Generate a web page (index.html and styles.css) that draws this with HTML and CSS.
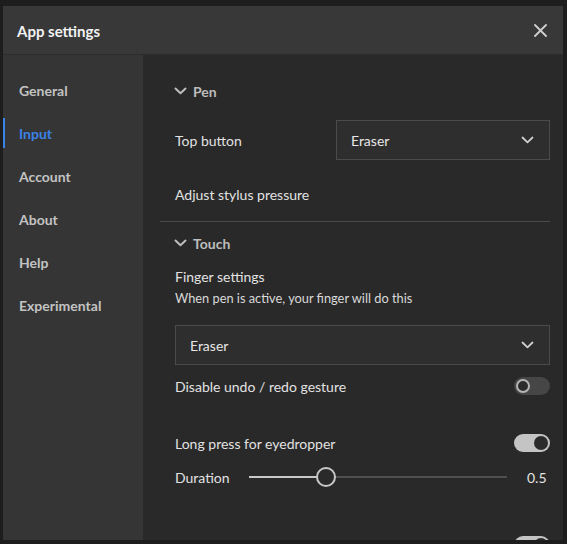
FILE: index.html
```html
<!DOCTYPE html>
<html lang="en">
<head>
<meta charset="utf-8">
<title>App settings</title>
<link rel="stylesheet" href="styles.css">
</head>
<body>
<div class="dialog">
  <header class="dlg-head">
    <h1 class="dlg-title">App settings</h1>
    <button class="close" aria-label="Close">
      <svg width="13" height="13" viewBox="0 0 13 13"><path d="M1 1 L12 12 M12 1 L1 12" stroke="#cfcfcf" stroke-width="1.8" fill="none" stroke-linecap="round"/></svg>
    </button>
  </header>
  <div class="dlg-body">
    <nav class="side">
      <div class="nav-item">General</div>
      <div class="nav-item active">Input</div>
      <div class="nav-item">Account</div>
      <div class="nav-item">About</div>
      <div class="nav-item">Help</div>
      <div class="nav-item">Experimental</div>
    </nav>
    <main class="content">
      <div class="sec-head sec-pen">
        <svg class="sec-chev" width="13" height="8" viewBox="0 0 13 8"><path d="M1.5 1.5 L6.5 6.3 L11.5 1.5" stroke="#bdbdbd" stroke-width="2" fill="none" stroke-linecap="round" stroke-linejoin="round"/></svg>
        <span>Pen</span>
      </div>
      <div class="row row-top">
        <span class="label">Top button</span>
        <div class="select select-half">
          <span>Eraser</span>
          <svg width="13" height="8" viewBox="0 0 13 8"><path d="M1.5 1.5 L6.5 6.3 L11.5 1.5" stroke="#cfcfcf" stroke-width="1.8" fill="none" stroke-linecap="round" stroke-linejoin="round"/></svg>
        </div>
      </div>
      <div class="row row-adjust"><span class="label">Adjust stylus pressure</span></div>
      <div class="divider"></div>
      <div class="sec-head sec-touch">
        <svg class="sec-chev" width="13" height="8" viewBox="0 0 13 8"><path d="M1.5 1.5 L6.5 6.3 L11.5 1.5" stroke="#bdbdbd" stroke-width="2" fill="none" stroke-linecap="round" stroke-linejoin="round"/></svg>
        <span>Touch</span>
      </div>
      <div class="indent finger-title">Finger settings</div>
      <div class="indent finger-desc">When pen is active, your finger will do this</div>
      <div class="indent">
        <div class="select select-full">
          <span>Eraser</span>
          <svg width="13" height="8" viewBox="0 0 13 8"><path d="M1.5 1.5 L6.5 6.3 L11.5 1.5" stroke="#cfcfcf" stroke-width="1.8" fill="none" stroke-linecap="round" stroke-linejoin="round"/></svg>
        </div>
      </div>
      <div class="row row-undo">
        <span class="label">Disable undo / redo gesture</span>
        <span class="toggle off"><span class="knob"></span></span>
      </div>
      <div class="row row-long">
        <span class="label">Long press for eyedropper</span>
        <span class="toggle on"><span class="knob"></span></span>
      </div>
      <div class="row row-dur">
        <span class="label dur-label">Duration</span>
        <div class="slider">
          <div class="track"><div class="fill" style="width:30%"></div></div>
          <div class="thumb" style="left:30%"></div>
        </div>
        <span class="dur-val">0.5</span>
      </div>
      <div class="row row-next">
        <span class="label"></span>
        <span class="toggle on"><span class="knob"></span></span>
      </div>
    </main>
  </div>
</div>
</body>
</html>
```

FILE: styles.css
```css
html, body {
  margin: 0;
  padding: 0;
  background: #1d1d1d;
  font-family: Lato, "Noto Sans", "Liberation Sans", sans-serif;
}
.dialog {
  margin: 6px 4px 0 3px;
  width: 560px;
  height: 534px;
  background: #292929;
  display: flex;
  flex-direction: column;
  overflow: hidden;
}
.dlg-head {
  height: 48px;
  flex: none;
  background: #383838;
  border-bottom: 1px solid #2c2c2c;
  display: flex;
  align-items: center;
  justify-content: space-between;
  padding: 0 16px 0 14px;
}
.dlg-title {
  margin: 0;
  font-size: 15px;
  font-weight: 700;
  color: #f2f2f2;
  padding-top: 2px;
}
.close {
  background: none;
  border: 0;
  padding: 0;
  width: 13px;
  height: 13px;
  display: flex;
}
.dlg-body {
  flex: 1;
  display: flex;
  min-height: 0;
}
.side {
  width: 140px;
  flex: none;
  background: #353535;
  padding-top: 14px;
}
.nav-item {
  position: relative;
  height: 43px;
  line-height: 43px;
  padding-left: 16px;
  font-size: 14px;
  font-weight: 700;
  color: #c3c3c3;
}
.nav-item.active {
  color: #3b82e6;
}
.nav-item.active::before {
  content: "";
  position: absolute;
  left: 0;
  top: 6px;
  width: 2px;
  height: 30px;
  background: #3b82e6;
}
.content {
  flex: 1;
  padding: 18px 13px 0 17px;
  display: flex;
  flex-direction: column;
  overflow: hidden;
  color: #e0e0e0;
  font-size: 14px;
}
.sec-head {
  height: 36px;
  display: flex;
  align-items: center;
  gap: 6px;
  padding-left: 14px;
  font-weight: 700;
  color: #bdbdbd;
  font-size: 14px;
  flex: none;
}
.row {
  display: flex;
  align-items: center;
  justify-content: space-between;
  padding-left: 15px;
  flex: none;
}
.label {
  color: #e2e2e2;
}
.row-top {
  margin-top: 11px;
  height: 40px;
}
.select {
  box-sizing: border-box;
  height: 40px;
  border: 1px solid #4b4b4b;
  background: #2e2e2e;
  display: flex;
  align-items: center;
  justify-content: space-between;
  padding: 0 15px 0 14px;
  color: #e6e6e6;
  font-size: 14px;
}
.select-half {
  width: 214px;
}
.select-full {
  width: 375px;
}
.row-adjust {
  margin-top: 14px;
  height: 40px;
}
.divider {
  margin-top: 7px;
  height: 1px;
  background: #4a4a4a;
  flex: none;
}
.sec-touch {
  margin-top: 3px;
}
.indent {
  padding-left: 15px;
  flex: none;
}
.finger-title {
  margin-top: 6px;
  line-height: 20px;
  color: #e2e2e2;
}
.finger-desc {
  margin-top: 2px;
  line-height: 18px;
  font-size: 12.8px;
  color: #dadada;
}
.finger-desc + .indent {
  margin-top: 18px;
}
.row-undo {
  margin-top: 9px;
  height: 24px;
}
.row-long {
  margin-top: 33px;
  height: 24px;
}
.row-dur {
  margin-top: 10px;
  height: 24px;
  justify-content: flex-start;
}
.row-next {
  margin-top: 44px;
  height: 24px;
}
.toggle {
  box-sizing: border-box;
  width: 36px;
  height: 18px;
  border-radius: 9px;
  display: flex;
  align-items: center;
  padding: 0 2px;
  flex: none;
}
.toggle .knob {
  box-sizing: border-box;
  width: 14px;
  height: 14px;
  border-radius: 50%;
}
.toggle.off {
  background: #464646;
}
.toggle.off .knob {
  border: 2px solid #b5b5b5;
  background: #2c2c2c;
}
.toggle.on {
  background: #c4c4c4;
  justify-content: flex-end;
}
.toggle.on .knob {
  background: #2b2b2b;
}
.dur-label {
  width: 74px;
  flex: none;
}
.slider {
  position: relative;
  width: 258px;
  height: 24px;
  flex: none;
}
.track {
  position: absolute;
  left: 0;
  right: 0;
  top: 11px;
  height: 2px;
  background: #4f4f4f;
}
.fill {
  height: 100%;
  background: #c8c8c8;
}
.thumb {
  position: absolute;
  top: 2px;
  box-sizing: border-box;
  width: 20px;
  height: 20px;
  margin-left: -10px;
  border-radius: 50%;
  border: 2px solid #c8c8c8;
  background: #2a2a2a;
}
.dur-val {
  margin-left: 20px;
  color: #e2e2e2;
}
```
